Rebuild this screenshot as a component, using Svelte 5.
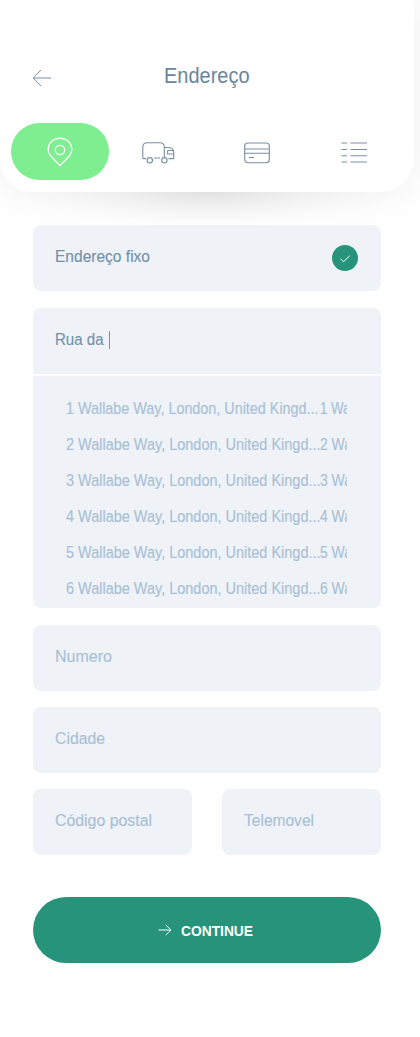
<script>
  const suggestions = [1, 2, 3, 4, 5, 6];
</script>

{#snippet label(text, width, size = 16.7)}
  <svg class="label" {width} height="20" aria-label={text}>
    <text x="0" y="15" font-size={size} textLength={width} lengthAdjust="spacingAndGlyphs">{text}</text>
  </svg>
{/snippet}

<main>
  <header>
    <div class="top">
      <svg class="back" width="20" height="18" viewBox="0 0 20 18">
        <path d="M19 9H1.2M9 1L1.2 9L9 17" />
      </svg>
      <h1>{@render label('Endereço', 85.5, 21.3)}</h1>
    </div>
    <nav>
      <button class="active" aria-label="Endereço">
        <svg width="26" height="30" viewBox="0 0 26 30">
          <path d="M13 28.5L4.7 20C-.2 15 .4 8.4 4.5 4.6C9.1 .1 16.9 .1 21.5 4.6C25.6 8.4 26.2 15 21.3 20Z" />
          <circle cx="13" cy="13" r="4.7" />
        </svg>
      </button>
      <button aria-label="Entrega">
        <svg class="truck" width="36" height="24" viewBox="0 0 36 24">
          <path d="M6 18.6H3.6Q2.8 18.6 2.8 17.8V7.3C2.8 4.4 4.4 2.8 7.1 2.8H20C22.8 2.8 24.3 4.5 24.3 7V17M14 18H20M24.3 7.5H28C32 7.5 33.7 9.5 33.7 12.5V18.6H28.5M33.5 10.5H28.3Q27.6 10.5 27.6 11.2V14H33.7" />
          <circle cx="9.8" cy="20.3" r="2.7" /><circle cx="24.4" cy="20.3" r="2.7" />
        </svg>
      </button>
      <button aria-label="Pagamento">
        <svg class="card" width="26" height="22" viewBox="0 0 26 22">
          <rect x=".7" y="1" width="24.6" height="19.7" rx="3" />
          <path d="M1 7H25M1 11.2H25M5 15.5H10" />
        </svg>
      </button>
      <button aria-label="Resumo">
        <svg class="lines" width="26" height="22" viewBox="0 0 26 22">
          <path d="M.5 1H6M9.5 1H26M.5 7.5H6M9.5 7.5H26M.5 13.7H6M9.5 13.7H26M.5 20H6M9.5 20H26" />
        </svg>
      </button>
    </nav>
  </header>

  <form>
    <div class="field dark">
      {@render label('Endereço fixo', 95)}
      <span class="check">
        <svg width="26" height="26" viewBox="0 0 26 26"><path d="M8.5 13.7L11.5 16.7L17.7 10.8" /></svg>
      </span>
    </div>
    <div class="search">
      <div class="field dark">{@render label('Rua da', 48.5)}<i class="caret"></i></div>
      <div class="list">
        {#each suggestions as n}
          <div class="row">
            <span class="address">{@render label(`${n} Wallabe Way, London, United Kingd...`, n === 1 ? 252.5 : 254.5)}</span>
            {@render label(`${n} Wa`, n === 1 ? 30.5 : 32)}
          </div>
        {/each}
      </div>
    </div>
    <div class="field">{@render label('Numero', 57)}</div>
    <div class="field">{@render label('Cidade', 50)}</div>
    <div class="pair">
      <div class="field">{@render label('Código postal', 97)}</div>
      <div class="field">{@render label('Telemovel', 70)}</div>
    </div>
    <button type="button" class="continue">
      <svg width="14" height="12" viewBox="0 0 14 12"><path d="M.5 6H13M7.7 1L13 6L7.7 11" /></svg>
      {@render label('CONTINUE', 72, 14.3)}
    </button>
  </form>
</main>

<style>
  :global(body) { margin: 0; background: #fff; }
  main { width: 420px; height: 1037px; overflow: hidden; background: #fefefe; font-family: "Liberation Sans", Arial, sans-serif; }
  svg { display: block; flex: none; fill: none; stroke: #7890a6; stroke-width: 1; }
  .label { overflow: visible; fill: #a8c0d6; stroke: #a8c0d6; stroke-width: .15; }
  button { border: 0; padding: 0; background: none; font: inherit; }
  header {
    position: relative; box-sizing: border-box; width: 414px; height: 192px; padding-top: 60px;
    background: #fff; border-radius: 0 0 33px 33px;
    box-shadow: 0 0 36px rgba(0, 0, 0, .06);
  }
  header::after {
    content: ""; position: absolute; top: 192px; left: 17px; width: 380px; height: 38px; pointer-events: none;
    background: radial-gradient(190px 38px at 50% 0, rgba(0, 0, 0, .085), rgba(0, 0, 0, .035) 45%, rgba(0, 0, 0, .006) 80%, transparent);
  }
  .top { display: grid; grid-template-columns: 132px 1fr; height: 63px; padding-left: 32px; }
  .back { margin-top: 9px; }
  h1 { margin: 8px 0 0; font-weight: 400; }
  h1 :global(.label) { fill: #6b859c; stroke: none; }
  nav { display: flex; padding-left: 11px; }
  nav button { display: grid; place-items: center; width: 98px; height: 57px; border-radius: 29px; }
  nav .active { background: #7eee90; }
  .active svg { stroke: #fff; stroke-width: 1.3; }
  .truck { stroke-width: 1.1; }
  .card { margin: 2px 0 0 2px; stroke-width: 1.15; }
  .lines { margin-top: 3px; stroke-width: 1.1; }
  form { display: flex; flex-direction: column; gap: 16px; width: 348px; padding: 33px 0 0 33px; }
  .field { display: flex; align-items: center; box-sizing: border-box; height: 66px; padding: 0 23px 2px 22px; border-radius: 8px; background: #eff3f8; }
  .dark :global(.label) { fill: #7590a8; stroke: #7590a8; }
  .check { margin-left: auto; width: 26px; height: 26px; border-radius: 50%; background: #27937b; transform: translateY(1px); }
  .check svg { stroke: #fff; }
  .search { display: flex; flex-direction: column; gap: 2px; margin: 1px 0; }
  .search .field { border-radius: 8px 8px 0 0; }
  .caret { width: 1.3px; height: 18px; margin-left: 5.5px; background: #7590a8; }
  .list { box-sizing: border-box; height: 232px; padding: 15px 34px 0 33px; border-radius: 0 0 8px 8px; background: #eff3f8; overflow: hidden; }
  .row { display: flex; align-items: center; height: 36px; overflow: hidden; }
  .address { flex: none; width: 253.5px; }
  .pair { display: grid; grid-template-columns: 159px 159px; gap: 30px; }
  .continue { display: flex; align-items: center; justify-content: center; gap: 9px; height: 66px; margin-top: 26px; padding: 1px 4px 0 0; border-radius: 33px; background: #27937b; font-weight: 700; }
  .continue svg { margin-top: -1px; stroke: #fff; }
  .continue :global(.label) { margin-top: 1px; fill: #fff; stroke: none; }
</style>
